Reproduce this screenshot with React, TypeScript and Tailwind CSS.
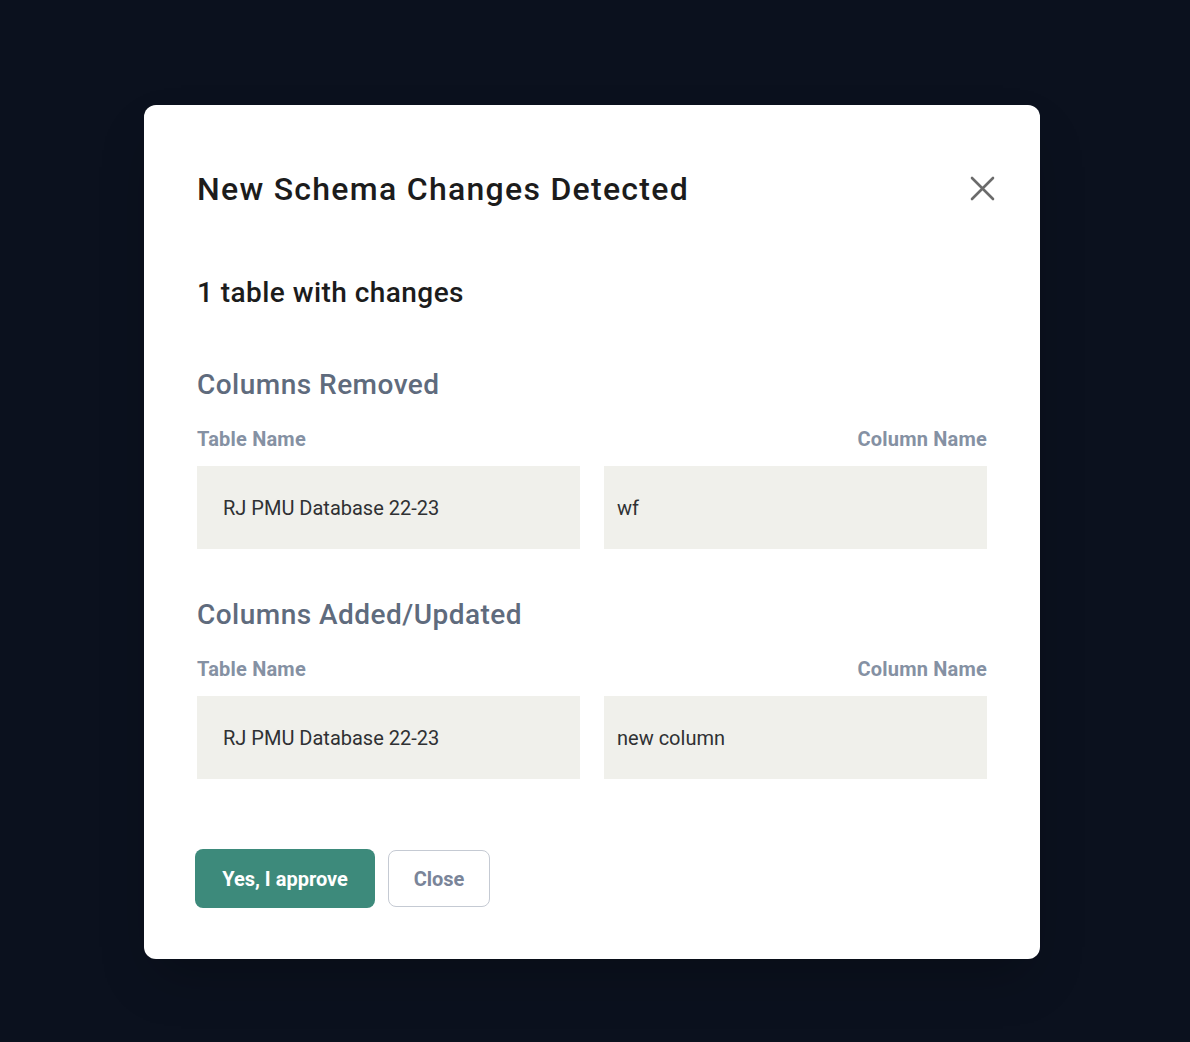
const font = { fontFamily: 'Roboto, "Noto Sans", sans-serif' };

function Section({ title, table, column }: { title: string; table: string; column: string }) {
  return (
    <div className="flex flex-col">
      <h3 className="text-[28px] leading-9 font-medium tracking-[0.017em] text-[#5f6b7d]">{title}</h3>
      <div className="mt-[22px] flex items-center justify-between text-[20px] leading-7 font-bold tracking-[0.01em] text-[#8591a3]">
        <span>Table Name</span>
        <span>Column Name</span>
      </div>
      <div className="mt-[13px] grid grid-cols-2 gap-6">
        <div className="flex h-[83px] items-center bg-[#f0f0eb] px-[26px] text-[20px] text-[#2f3133]">{table}</div>
        <div className="flex h-[83px] items-center bg-[#f0f0eb] px-[13px] text-[20px] text-[#2f3133]">{column}</div>
      </div>
    </div>
  );
}

export default function App() {
  return (
    <div className="flex min-h-[1042px] w-full items-start bg-[#0b111e] pt-[105px] pl-[144px]" style={font}>
      <div className="relative flex w-[896px] flex-col rounded-xl bg-white px-[53px] pt-16 pb-[51px] shadow-2xl">
        <div className="flex items-center justify-between">
          <h1 className="text-[32px] leading-10 font-medium tracking-[0.04em] text-[#1c1c1c]">New Schema Changes Detected</h1>
          <button className="-mr-2 -mt-0.5 text-[#6b6b6b]">
            <svg width="25" height="25" viewBox="0 0 25 25" fill="none" stroke="currentColor" strokeWidth="2.6" strokeLinecap="round">
              <path d="M2 2L23 23M23 2L2 23" />
            </svg>
          </button>
        </div>
        <h2 className="mt-[66px] text-[28px] leading-9 font-medium tracking-[0.016em] text-[#1c1c1c]">1 table with changes</h2>
        <div className="mt-[56px] flex flex-col gap-12">
          <Section title="Columns Removed" table="RJ PMU Database 22-23" column="wf" />
          <Section title="Columns Added/Updated" table="RJ PMU Database 22-23" column="new column" />
        </div>
        <div className="mt-[70px] flex items-center gap-[13px]">
          <button className="-ml-0.5 h-[59px] w-[180px] rounded-lg bg-[#3d8a7b] text-[20px] font-bold text-white">Yes, I approve</button>
          <button className="h-[57px] w-[102px] rounded-lg border border-[#c5cad3] bg-white text-[20px] font-bold text-[#7a8599]">Close</button>
        </div>
      </div>
    </div>
  );
}
